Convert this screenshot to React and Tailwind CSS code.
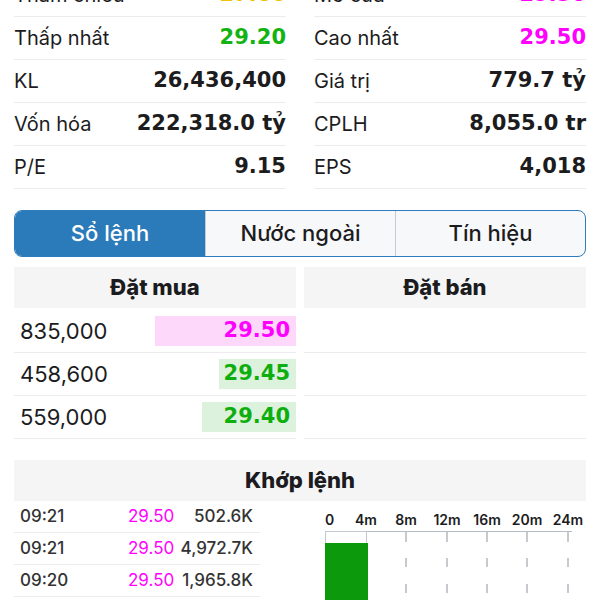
import React from 'react'

const stats = [
    [
        { label: 'Tham chiếu', value: '27.60', color: 'text-[#f2c200]' },
        { label: 'Mở cửa', value: '29.50', color: 'text-[#f0f]' },
    ],
    [
        { label: 'Thấp nhất', value: '29.20', color: 'text-[#12b312]' },
        { label: 'Cao nhất', value: '29.50', color: 'text-[#f0f]' },
    ],
    [
        { label: 'KL', value: '26,436,400', color: 'text-[#1c1c1e]' },
        { label: 'Giá trị', value: '779.7 tỷ', color: 'text-[#1c1c1e]' },
    ],
    [
        { label: 'Vốn hóa', value: '222,318.0 tỷ', color: 'text-[#1c1c1e]' },
        { label: 'CPLH', value: '8,055.0 tr', color: 'text-[#1c1c1e]' },
    ],
    [
        { label: 'P/E', value: '9.15', color: 'text-[#1c1c1e]' },
        { label: 'EPS', value: '4,018', color: 'text-[#1c1c1e]' },
    ],
]

const bids = [
    { qty: '835,000', price: '29.50', bar: 'w-[141px] bg-[#fdd8fb] text-[#f0f]' },
    { qty: '458,600', price: '29.45', bar: 'w-[77px] bg-[#ddf2dd] text-[#0fae0f]' },
    { qty: '559,000', price: '29.40', bar: 'w-[94px] bg-[#ddf2dd] text-[#0fae0f]' },
]

const trades = [
    { time: '09:21', price: '29.50', vol: '502.6K' },
    { time: '09:21', price: '29.50', vol: '4,972.7K' },
    { time: '09:20', price: '29.50', vol: '1,965.8K' },
]

const valueFont = "font-['DejaVu_Sans',sans-serif] font-bold"

function StatCell({ label, value, color }) {
    return (
        <div className="flex h-[43px] items-center justify-between border-b border-[#ececee]">
            <span className="text-[20px] text-[#1c1c1e]">{label}</span>
            <span className={`${valueFont} text-[21px] ${color}`}>{value}</span>
        </div>
    )
}

function Tabs() {
    const tabs = ['Sổ lệnh', 'Nước ngoài', 'Tín hiệu']
    return (
        <div className="mt-[21px] grid h-[47px] grid-cols-3 overflow-hidden rounded-[8px] border border-[#2d7cbd] bg-[#f7f8fa]">
            {tabs.map((t, i) => (
                <div
                    key={t}
                    className={
                        i === 0
                            ? 'flex items-center justify-center bg-[#2b7bbb] text-[22px] font-medium text-white'
                            : 'flex items-center justify-center border-l border-[#c5c9d0] text-[22px] font-medium text-[#1c1c1e]'
                    }
                >
                    {t}
                </div>
            ))}
        </div>
    )
}

function SectionHeader({ children }) {
    return (
        <div className="flex h-[41px] items-center justify-center bg-[#f5f5f6] text-[22px] font-extrabold text-[#1c1c1e]">
            {children}
        </div>
    )
}

function OrderBook() {
    return (
        <div className="mt-[10px] grid grid-cols-2 gap-x-[8px]">
            <div>
                <SectionHeader>Đặt mua</SectionHeader>
                <div className="pt-[2px]">
                    {bids.map((b, i) => (
                        <div key={i} className="flex h-[43px] items-center justify-between border-b border-[#ececee]">
                            <span className="pl-[6px] text-[22px] text-[#1c1c1e]">{b.qty}</span>
                            <span className={`flex h-[30px] items-center justify-end pr-[6px] ${valueFont} text-[21px] ${b.bar}`}>
                                {b.price}
                            </span>
                        </div>
                    ))}
                </div>
            </div>
            <div>
                <SectionHeader>Đặt bán</SectionHeader>
                <div className="pt-[2px]">
                    {bids.map((_, i) => (
                        <div key={i} className="h-[43px] border-b border-[#ececee]" />
                    ))}
                </div>
            </div>
        </div>
    )
}

function VolumeChart() {
    const ticks = [325, 366, 406, 447, 487, 527, 568]
    const labels = ['0', '4m', '8m', '12m', '16m', '20m', '24m']
    return (
        <svg width="286" height="100" viewBox="300 500 286 100" className="block">
            {labels.map((l, i) => (
                <text
                    key={l}
                    x={ticks[i]}
                    y="524"
                    textAnchor={i === 0 ? 'start' : 'middle'}
                    fontSize="14"
                    fontWeight="600"
                    fill="#1c1c1e"
                    fontFamily="Inter, sans-serif"
                >
                    {l}
                </text>
            ))}
            <line x1="325" y1="530.5" x2="572" y2="530.5" stroke="#b6bdc9" strokeWidth="1.2" />
            <rect x="325.5" y="530.5" width="41" height="12" fill="none" stroke="#c3c8d2" strokeWidth="1" />
            {ticks.slice(2).map((x) => (
                <g key={x} stroke="#8e939c" strokeWidth="1">
                    <line x1={x} y1="531" x2={x} y2="541" />
                    <line x1={x} y1="557" x2={x} y2="566" />
                    <line x1={x} y1="583" x2={x} y2="592" />
                </g>
            ))}
            <rect x="325" y="542" width="43" height="60" fill="#0c990c" />
        </svg>
    )
}

function Matching() {
    return (
        <div className="mt-[21px]">
            <SectionHeader>Khớp lệnh</SectionHeader>
            <div className="flex">
                <div className="w-[246px]">
                    {trades.map((t, i) => (
                        <div key={i} className="flex h-[32px] items-center border-b border-[#ececee] text-[17px]">
                            <span className="w-[114px] pl-[6px] font-medium text-[#333]">{t.time}</span>
                            <span className="text-[#f0f]">{t.price}</span>
                            <span className="flex-1 pr-[7px] text-right font-medium text-[#333]">{t.vol}</span>
                        </div>
                    ))}
                </div>
                <div className="ml-[40px]">
                    <VolumeChart />
                </div>
            </div>
        </div>
    )
}

export default function App() {
    return (
        <div className="h-[600px] w-[600px] overflow-hidden bg-white font-['Inter',sans-serif]">
            <div className="-mt-[26px] px-[14px]">
                <div className="grid grid-cols-2 gap-x-[28px]">
                    {stats.map((row, i) => (
                        <React.Fragment key={i}>
                            <StatCell {...row[0]} />
                            <StatCell {...row[1]} />
                        </React.Fragment>
                    ))}
                </div>
                <Tabs />
                <OrderBook />
                <Matching />
            </div>
        </div>
    )
}
